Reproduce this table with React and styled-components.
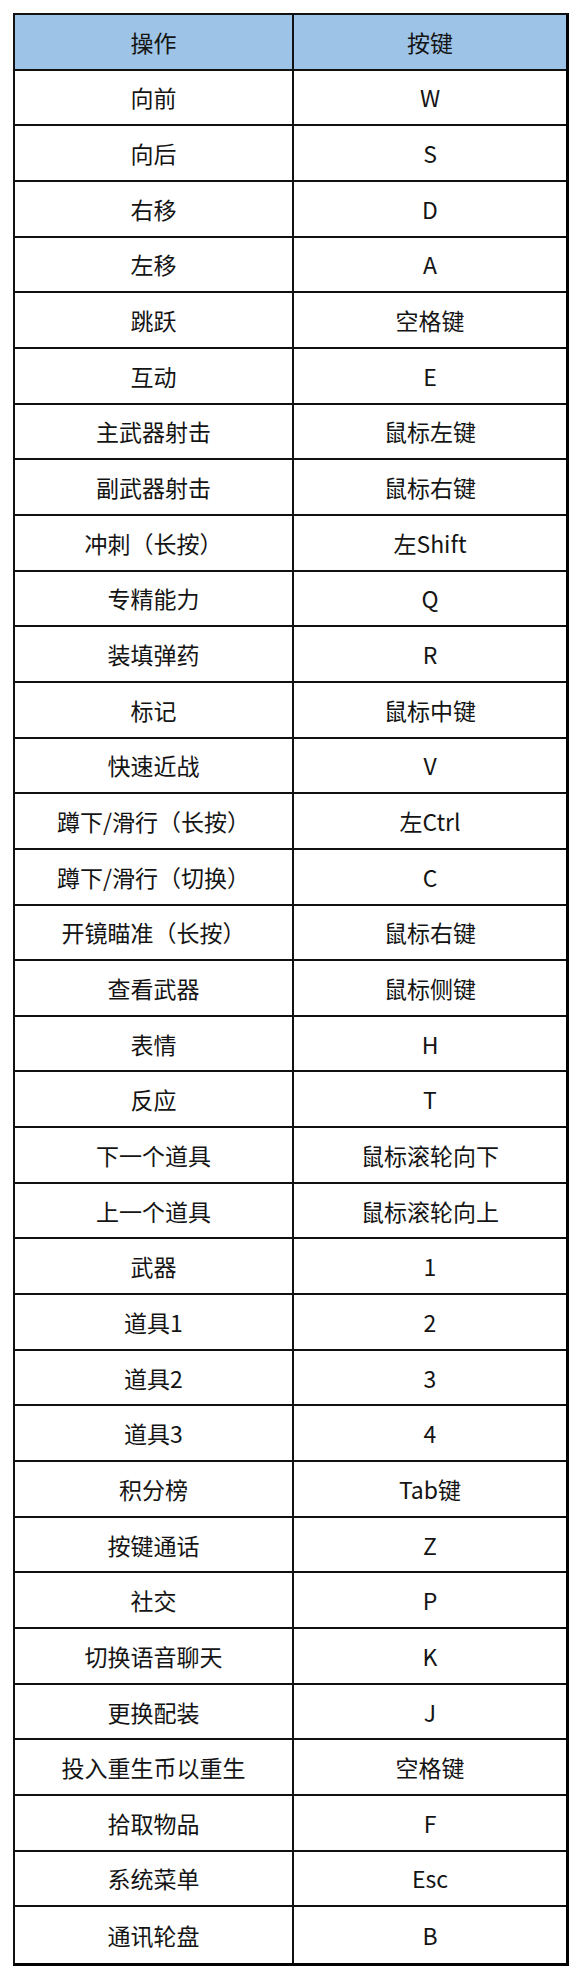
import React from "react";
import styled, { createGlobalStyle } from "styled-components";

const GlobalStyle = createGlobalStyle`
  html, body {
    margin: 0;
    padding: 0;
    background: #ffffff;
  }
  body {
    font-family: "Noto Sans CJK SC", "Noto Sans", sans-serif;
  }
`;

const Page = styled.div`
  padding: 13px 15px 15px 13px;
`;

const Table = styled.div`
  width: 556px;
  display: grid;
  grid-template-columns: 279px 1fr;
  grid-auto-rows: 55.66px;
  box-sizing: border-box;
  border-left: 2px solid #111;
  border-top: 2px solid #111;
  border-right: 3px solid #000;
  border-bottom: 3px solid #000;
`;

const Cell = styled.div`
  display: flex;
  align-items: center;
  justify-content: center;
  box-sizing: border-box;
  border-right: ${(p) => (p.$last ? "none" : "2px solid #111")};
  border-bottom: ${(p) => (p.$bottom ? "none" : "2px solid #111")};
  background: ${(p) => (p.$head ? "#9dc3e6" : "#ffffff")};
  color: #141414;
  font-size: 23px;
  line-height: 1;
  padding-top: 1px;
`;

const rows = [
  ["向前", "W"],
  ["向后", "S"],
  ["右移", "D"],
  ["左移", "A"],
  ["跳跃", "空格键"],
  ["互动", "E"],
  ["主武器射击", "鼠标左键"],
  ["副武器射击", "鼠标右键"],
  ["冲刺（长按）", "左Shift"],
  ["专精能力", "Q"],
  ["装填弹药", "R"],
  ["标记", "鼠标中键"],
  ["快速近战", "V"],
  ["蹲下/滑行（长按）", "左Ctrl"],
  ["蹲下/滑行（切换）", "C"],
  ["开镜瞄准（长按）", "鼠标右键"],
  ["查看武器", "鼠标侧键"],
  ["表情", "H"],
  ["反应", "T"],
  ["下一个道具", "鼠标滚轮向下"],
  ["上一个道具", "鼠标滚轮向上"],
  ["武器", "1"],
  ["道具1", "2"],
  ["道具2", "3"],
  ["道具3", "4"],
  ["积分榜", "Tab键"],
  ["按键通话", "Z"],
  ["社交", "P"],
  ["切换语音聊天", "K"],
  ["更换配装", "J"],
  ["投入重生币以重生", "空格键"],
  ["拾取物品", "F"],
  ["系统菜单", "Esc"],
  ["通讯轮盘", "B"],
];

const App = () => {
  return (
    <Page>
      <GlobalStyle />
      <Table>
        <Cell $head>操作</Cell>
        <Cell $head $last>按键</Cell>
        {rows.map(([action, key], i) => {
          const bottom = i === rows.length - 1;
          return (
            <React.Fragment key={action + i}>
              <Cell $bottom={bottom}>{action}</Cell>
              <Cell $bottom={bottom} $last>{key}</Cell>
            </React.Fragment>
          );
        })}
      </Table>
    </Page>
  );
};

export default App;
